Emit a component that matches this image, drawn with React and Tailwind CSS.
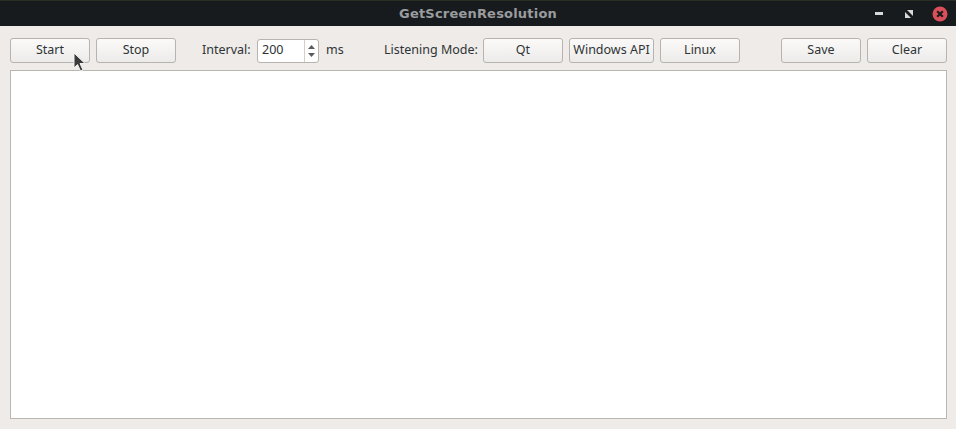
import React from 'react';

const font = { fontFamily: '"Noto Sans", "DejaVu Sans", sans-serif' };

function Btn({ children, w = 'w-[80px]' }) {
  return (
    <button className={`${w} h-[25px] rounded-[3px] border border-[#b7b3af] bg-gradient-to-b from-[#fbfaf9] to-[#ecebe9] text-[12.5px] text-[#2e3436] leading-none shrink-0`}>
      {children}
    </button>
  );
}

function SpinBox() {
  return (
    <div className="flex h-[24px] w-[62px] rounded-[3px] border border-[#b7b3af] bg-white">
      <div className="flex-1 flex items-center pl-[4px] text-[12.5px] text-[#2e3436]">200</div>
      <div className="w-[14px] border-l border-[#d3cfcb] flex flex-col items-center justify-center gap-[4px]">
        <svg width="7" height="4" viewBox="0 0 7 4"><path d="M3.5 0L7 4H0z" fill="#5a5a5a" /></svg>
        <svg width="7" height="4" viewBox="0 0 7 4"><path d="M0 0h7L3.5 4z" fill="#5a5a5a" /></svg>
      </div>
    </div>
  );
}

export default function App() {
  return (
    <div className="w-[956px] h-[429px] bg-[#eeebe8] flex flex-col relative overflow-hidden" style={font}>
      {/* title bar */}
      <div className="h-[26px] bg-[#171b1e] border-t border-[#2a2f26] flex items-center relative shrink-0">
        <div className="absolute inset-0 flex items-center justify-center">
          <span className="text-[13px] font-bold text-[#9a9c9e] tracking-[0.2px]" style={{ fontFamily: '"DejaVu Sans", sans-serif' }}>GetScreenResolution</span>
        </div>
        <div className="ml-auto flex items-center gap-[16px] pr-[8px] relative">
          <div className="w-[14px] flex justify-center"><div className="w-[8px] h-[3px] bg-[#d8d8d8]" /></div>
          <svg width="14" height="14" viewBox="0 0 14 14">
            <path d="M5 3h6v6z" fill="#d8d8d8" />
            <path d="M3 5v6h6z" fill="#d8d8d8" />
          </svg>
          <svg width="16" height="16" viewBox="0 0 16 16">
            <circle cx="8" cy="8" r="7.5" fill="#d9505a" />
            <path d="M5.2 5.2l5.6 5.6M10.8 5.2l-5.6 5.6" stroke="#1a1a1a" strokeWidth="2.2" />
          </svg>
        </div>
      </div>

      {/* toolbar */}
      <div className="flex items-center h-[25px] mt-[12px] pl-[10px] pr-[9px] shrink-0 text-[12.5px] text-[#2e3436]">
        <Btn>Start</Btn>
        <div className="ml-[6px]"><Btn>Stop</Btn></div>
        <span className="ml-[26px] w-[50px] whitespace-nowrap">Interval:</span>
        <div className="ml-[5px]"><SpinBox /></div>
        <span className="ml-[7px] w-[16px]">ms</span>
        <span className="ml-[42px] w-[94px] whitespace-nowrap">Listening Mode:</span>
        <div className="ml-[5px]"><Btn>Qt</Btn></div>
        <div className="ml-[6px]"><Btn w="w-[85px]">Windows API</Btn></div>
        <div className="ml-[6px]"><Btn>Linux</Btn></div>
        <div className="ml-auto flex gap-[6px]">
          <Btn>Save</Btn>
          <Btn>Clear</Btn>
        </div>
      </div>

      {/* output area */}
      <div className="ml-[10px] mr-[9px] mt-[7px] h-[349px] bg-white border border-[#b9b5b1]" />

      {/* mouse cursor */}
      <svg className="absolute left-[73px] top-[52px]" width="14" height="21" viewBox="0 0 14 21">
        <path d="M1 1v15l3.5-3.5 3 6.5 2.5-1-3-6.5h5z" fill="#3a3a3a" stroke="#f2f2f2" strokeWidth="1" />
      </svg>
    </div>
  );
}
